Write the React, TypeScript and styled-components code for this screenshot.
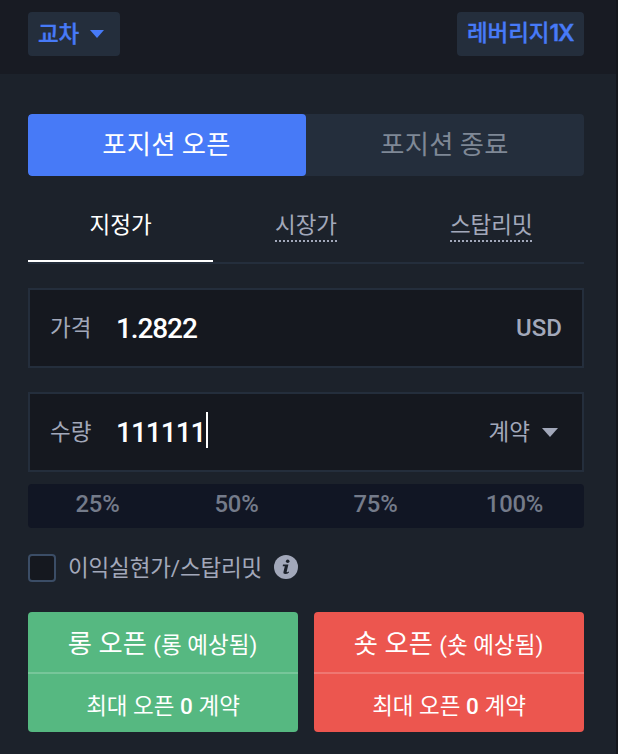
import React from "react";
import styled, { createGlobalStyle } from "styled-components";

const Global = createGlobalStyle`
  *, *::before, *::after { box-sizing: border-box; }
  html, body { margin: 0; background: #14171d; overflow: hidden; }
  button { font: inherit; border: 0; padding: 0; margin: 0; }
`;

const Panel = styled.main`
  width: 616px;
  height: 754px;
  background: #1c222b;
  font-family: Roboto, "Noto Sans CJK KR", sans-serif;
  font-size: 22.5px;
  line-height: 32px;
  color: #a2a8ba;
`;

const Header = styled.header`
  display: flex;
  justify-content: space-between;
  height: 74px;
  padding: 12px 32px 0 28px;
  background: #181b23;
`;

const Chip = styled.button<{ $width: number }>`
  display: flex;
  align-items: center;
  gap: 11px;
  width: ${(p) => p.$width}px;
  height: 44px;
  padding: 0 0 0 10px;
  border-radius: 4px;
  background: #242e3c;
  color: #477af7;
  white-space: nowrap;
`;

const ChipLabel = styled.span`
  padding-bottom: 4px;
  font-family: "Noto Sans CJK KR", sans-serif;
  font-weight: 500;
  letter-spacing: -0.1px;
  -webkit-text-stroke: 0.3px currentColor;
`;

const ChipValue = styled.span`
  font-family: Inter, sans-serif;
  font-size: 23px;
  font-weight: 600;
  letter-spacing: -1.2px;
`;

const Form = styled.section`
  display: flex;
  flex-direction: column;
  padding: 40px 32px 0 28px;
`;

const Segments = styled.div`
  display: grid;
  grid-template-columns: 1fr 1fr;
  height: 62px;
  border-radius: 4px;
  overflow: hidden;
  background: #242e3c;
`;

const Segment = styled.button<{ $active?: boolean }>`
  padding: 0 1px 4px 0;
  background: ${(p) => (p.$active ? "#477af7" : "transparent")};
  border-radius: ${(p) => (p.$active ? "4px" : "0")};
  color: ${(p) => (p.$active ? "#fff" : "#7f8896")};
  font-family: "Noto Sans CJK KR", sans-serif;
  font-size: 26.3px;
  letter-spacing: 0.25px;
`;

const Tabs = styled.nav`
  display: grid;
  grid-template-columns: repeat(3, 1fr);
  height: 88px;
  border-bottom: 2px solid #242e3c;
`;

const Tab = styled.div<{ $active?: boolean }>`
  display: flex;
  justify-content: center;
  align-items: flex-start;
  padding-top: 31px;
  border-bottom: 2px solid ${(p) => (p.$active ? "#fff" : "transparent")};
  color: ${(p) => (p.$active ? "#fff" : "#a2a8ba")};
  font-family: "Noto Sans CJK KR", sans-serif;
`;

const DottedLabel = styled.span`
  height: 35px;
  background: repeating-linear-gradient(90deg, #a2a8ba 0 2px, transparent 2px 4px) bottom / 100% 2px no-repeat;
`;

const Field = styled.label`
  display: flex;
  align-items: center;
  height: 80px;
  margin-top: 24px;
  padding: 0 20px;
  border: 2px solid #242e3c;
  background: #15181f;
`;

const FieldName = styled.span`
  width: 66px;
`;

const FieldValue = styled.span<{ $spacing: number }>`
  padding-top: 2px;
  color: #fff;
  font-size: 28px;
  font-weight: 500;
  letter-spacing: ${(p) => p.$spacing}px;
`;

const Caret = styled.i`
  width: 2px;
  height: 36px;
  margin: 0 0 4px 1px;
  background: #fff;
`;

const Unit = styled.span<{ $inset?: number }>`
  display: flex;
  align-items: center;
  gap: 12px;
  margin-left: auto;
  margin-right: ${(p) => p.$inset ?? 0}px;
  font-size: 24px;
  font-weight: 500;
`;

const UnitLabel = styled.span`
  font-size: 22.5px;
  font-weight: 400;
`;

const Percents = styled.div`
  display: grid;
  grid-template-columns: repeat(4, 1fr);
  height: 44px;
  margin-top: 12px;
  padding-top: 4px;
  border-radius: 4px;
  background: #111624;
  color: #747b8a;
  font-size: 23.8px;
  font-weight: 500;
  letter-spacing: -0.2px;
  text-align: center;
`;

const Option = styled.div`
  display: flex;
  align-items: center;
  height: 28px;
  margin-top: 26px;
`;

const Checkbox = styled.span`
  width: 28px;
  height: 28px;
  margin-right: 12px;
  border: 2px solid #3b4d66;
  border-radius: 4px;
  background: #15181f;
`;

const OptionText = styled.span`
  margin-right: 11.5px;
  letter-spacing: -0.15px;
`;

const InfoSvg = styled.svg`
  margin-bottom: 2px;
`;

const Actions = styled.div`
  display: grid;
  grid-template-columns: 1fr 1fr;
  gap: 16px;
  margin-top: 30px;
`;

const Action = styled.button<{ $color: string }>`
  display: grid;
  grid-template-rows: 62px 58px;
  height: 120px;
  border-radius: 4px;
  overflow: hidden;
  background: ${(p) => p.$color};
  color: #fff;
  text-align: center;
`;

const ActionTitle = styled.span`
  padding: 16px 1px 0 0;
  border-bottom: 2px solid rgba(255, 255, 255, 0.2);
  font-size: 26.3px;
`;

const ActionHint = styled.small`
  font-size: 22.5px;
`;

const ActionLimit = styled.span`
  padding-top: 16px;
`;

const Zero = styled.b`
  font-weight: 500;
`;

const Arrow = ({ width, height }: { width: number; height: number }) => (
  <svg width={width} height={height} viewBox="0 0 14 8" preserveAspectRatio="none">
    <path d="M0 0H14L7 8Z" fill="currentColor" />
  </svg>
);

const InfoIcon = () => (
  <InfoSvg width="24" height="24" viewBox="0 0 24 24">
    <circle cx="12" cy="12" r="12" fill="#a2a8ba" />
    <circle cx="13.7" cy="6.2" r="1.8" fill="#1c222b" />
    <path
      d="M9 9.6H14.4L12.7 16.4Q12.5 17.4 13.3 17.2L15 16.5L14.8 17.7Q13.4 19 11.2 19Q9 19 9.5 16.8L10.8 11.3H8.7Z"
      fill="#1c222b"
    />
  </InfoSvg>
);

const actions = [
  { side: "롱", color: "#56b881" },
  { side: "숏", color: "#ec564f" },
];

export default function App() {
  return (
    <>
      <Global />
      <Panel>
        <Header>
          <Chip $width={92}>
            <ChipLabel>교차</ChipLabel>
            <Arrow width={14} height={8} />
          </Chip>
          <Chip $width={127}>
            <ChipLabel>
              레버리지<ChipValue>1X</ChipValue>
            </ChipLabel>
          </Chip>
        </Header>
        <Form>
          <Segments>
            <Segment $active>포지션 오픈</Segment>
            <Segment>포지션 종료</Segment>
          </Segments>
          <Tabs>
            <Tab $active>지정가</Tab>
            <Tab>
              <DottedLabel>시장가</DottedLabel>
            </Tab>
            <Tab>
              <DottedLabel>스탑리밋</DottedLabel>
            </Tab>
          </Tabs>
          <Field>
            <FieldName>가격</FieldName>
            <FieldValue $spacing={-1.1}>1.2822</FieldValue>
            <Unit>USD</Unit>
          </Field>
          <Field>
            <FieldName>수량</FieldName>
            <FieldValue $spacing={-1}>111111</FieldValue>
            <Caret />
            <Unit $inset={4}>
              <UnitLabel>계약</UnitLabel>
              <Arrow width={16} height={9} />
            </Unit>
          </Field>
          <Percents>
            {[25, 50, 75, 100].map((n) => (
              <span key={n}>{n}%</span>
            ))}
          </Percents>
          <Option>
            <Checkbox />
            <OptionText>이익실현가/스탑리밋</OptionText>
            <InfoIcon />
          </Option>
          <Actions>
            {actions.map(({ side, color }) => (
              <Action key={side} $color={color}>
                <ActionTitle>
                  {side} 오픈 <ActionHint>({side} 예상됨)</ActionHint>
                </ActionTitle>
                <ActionLimit>
                  최대 오픈 <Zero>0</Zero> 계약
                </ActionLimit>
              </Action>
            ))}
          </Actions>
        </Form>
      </Panel>
    </>
  );
}
